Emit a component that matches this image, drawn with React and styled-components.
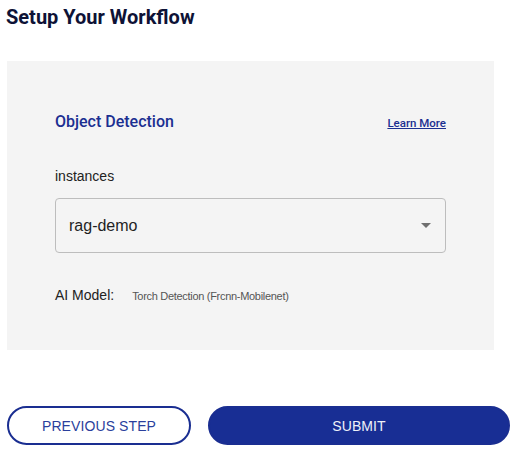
import React from "react";
import styled, { createGlobalStyle } from "styled-components";

const Global = createGlobalStyle`
  html, body { margin: 0; padding: 0; background: #ffffff; }
  body { font-family: "Liberation Sans", Arial, sans-serif; }
`;

const Page = styled.div`
  width: 516px;
  height: 454px;
  box-sizing: border-box;
  padding: 3px 6px 0 7px;
  display: flex;
  flex-direction: column;
`;

const Title = styled.h1`
  margin: 0 0 0 -1px;
  font-family: Roboto, "Liberation Sans", sans-serif;
  font-weight: 700;
  font-size: 20px;
  line-height: 28px;
  color: #0e1236;
`;

const Panel = styled.section`
  margin-top: 30px;
  width: 487px;
  height: 289px;
  box-sizing: border-box;
  background: #f4f4f4;
  padding: 50px 48px 0 48px;
  display: flex;
  flex-direction: column;
`;

const HeaderRow = styled.div`
  display: flex;
  justify-content: space-between;
  align-items: center;
  width: 391px;
`;

const SectionTitle = styled.h2`
  margin: 0;
  font-family: Roboto, "Liberation Sans", sans-serif;
  font-weight: 500;
  font-size: 16px;
  line-height: 22px;
  color: #1b2f91;
`;

const LearnMore = styled.a`
  font-family: Roboto, "Liberation Sans", sans-serif;
  font-weight: 500;
  font-size: 11.5px;
  line-height: 14px;
  color: #1b2f91;
  text-decoration: underline;
  margin-top: 2px;
  cursor: pointer;
`;

const FieldLabel = styled.div`
  margin-top: 34px;
  font-size: 14px;
  line-height: 18px;
  color: #222222;
`;

const SelectBox = styled.div`
  margin-top: 13px;
  width: 391px;
  height: 55px;
  box-sizing: border-box;
  border: 1px solid #bdbdbd;
  border-radius: 4px;
  display: flex;
  align-items: center;
  justify-content: space-between;
  padding: 0 13px 0 13px;
  font-size: 16px;
  color: #1f1f1f;
`;

const Arrow = styled.span`
  width: 0;
  height: 0;
  border-left: 5px solid transparent;
  border-right: 5px solid transparent;
  border-top: 5px solid #6f6f6f;
  margin-right: 1px;
`;

const ModelRow = styled.div`
  margin-top: 34px;
  display: flex;
  align-items: baseline;
  gap: 18px;
`;

const ModelLabel = styled.span`
  font-size: 14px;
  color: #222222;
`;

const ModelValue = styled.span`
  font-size: 11px;
  letter-spacing: -0.3px;
  color: #555555;
`;

const Actions = styled.div`
  margin-top: 56px;
  display: flex;
  gap: 17px;
`;

const Button = styled.button`
  height: 39px;
  box-sizing: border-box;
  border-radius: 20px;
  font-family: "Liberation Sans", Arial, sans-serif;
  font-size: 14px;
  letter-spacing: 0.1px;
  text-transform: uppercase;
  cursor: pointer;
  border: 2px solid #1a2e91;
  background: ${(p) => (p.$primary ? "#182e94" : "#ffffff")};
  color: ${(p) => (p.$primary ? "#eef0f8" : "#2a3f9c")};
  width: ${(p) => p.$w}px;
  padding: 0;
`;

export default function App() {
  return (
    <>
      <Global />
      <Page>
        <Title>Setup Your Workflow</Title>
        <Panel>
          <HeaderRow>
            <SectionTitle>Object Detection</SectionTitle>
            <LearnMore>Learn More</LearnMore>
          </HeaderRow>
          <FieldLabel>instances</FieldLabel>
          <SelectBox>
            <span>rag-demo</span>
            <Arrow />
          </SelectBox>
          <ModelRow>
            <ModelLabel>AI Model:</ModelLabel>
            <ModelValue>Torch Detection (Frcnn-Mobilenet)</ModelValue>
          </ModelRow>
        </Panel>
        <Actions>
          <Button $w={184}>Previous Step</Button>
          <Button $primary $w={302}>Submit</Button>
        </Actions>
      </Page>
    </>
  );
}
